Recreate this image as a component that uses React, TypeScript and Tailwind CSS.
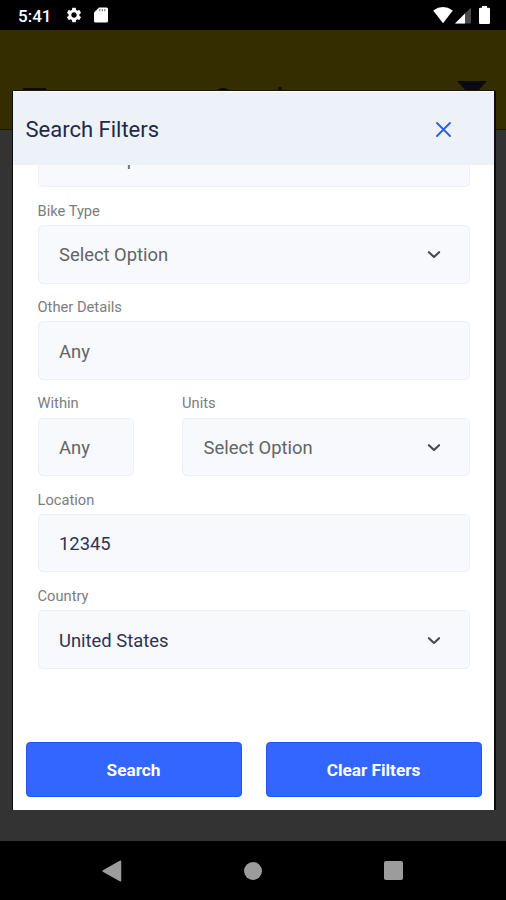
import { useState } from 'react';
import type { ReactNode } from 'react';
import { MdSettings } from 'react-icons/md';

interface FieldProps {
  label: string;
  value: string;
  filled?: boolean;
  dropdown?: boolean;
  className?: string;
}

function ChevronDown() {
  return (
    <svg width="14" height="10" viewBox="0 0 14 10" fill="none" className="shrink-0">
      <path d="M1.9 2.2 7 7 12.1 2.2" stroke="#48494c" strokeWidth="2.1" strokeLinecap="round" strokeLinejoin="round" />
    </svg>
  );
}

function Box({ children }: { children: ReactNode }) {
  return (
    <div className="flex h-[58.6px] items-center justify-between rounded-[5px] border border-[#eceff3] bg-[#f7f9fc] pt-[2.4px] pr-[28px] pl-[20.5px] text-[18.4px] leading-[24px]">
      {children}
    </div>
  );
}

function Field({ label, value, filled, dropdown, className }: FieldProps) {
  return (
    <div className={`pt-[13.6px] ${className ?? ''}`}>
      <div className="mb-[4.1px] text-[14.7px] leading-[20px] text-[#7b7d81]">{label}</div>
      <Box>
        <span className={filled ? 'text-[#2f3350]' : 'text-[#626467]'}>{value}</span>
        {dropdown && <ChevronDown />}
      </Box>
    </div>
  );
}

function StatusBar() {
  return (
    <div className="flex h-[30px] items-center justify-between bg-black pr-[16px] pl-[18px] text-white">
      <div className="flex items-center">
        <span className="w-[47px] pt-[2px] text-[17px] leading-[30px] font-medium">5:41</span>
        <MdSettings size={18} />
        <svg width="14" height="16" viewBox="0 0 14 16" className="ml-[11px]">
          <path d="M5 0.5H12.5Q14 0.5 14 2V14Q14 15.5 12.5 15.5H1.5Q0 15.5 0 14V5.5Z" fill="#fff" />
          <path d="M5.8 2V4.2M8.3 2V4.2M10.8 2V4.2" stroke="#777" strokeWidth="1.1" />
        </svg>
      </div>
      <div className="flex items-center">
        <svg width="20" height="17" viewBox="0 0 20 17">
          <path d="M0.2 3.4Q10-3.2 19.8 3.4L10 16.2Z" fill="#fff" />
        </svg>
        <svg width="17" height="17" viewBox="0 0 17 17" className="ml-[2px]">
          <path d="M16 0.5V16.5H0Z" fill="#4a4a4a" />
          <path d="M10 6.5V16.5H0Z" fill="#fff" />
        </svg>
        <svg width="11" height="18" viewBox="0 0 11 18" className="ml-[7px]">
          <path d="M3 0H8V1.8H9.7Q11 1.8 11 3.1V16.7Q11 18 9.7 18H1.3Q0 18 0 16.7V3.1Q0 1.8 1.3 1.8H3Z" fill="#fff" />
        </svg>
      </div>
    </div>
  );
}

function AppBar() {
  return (
    <div className="flex h-[100px] items-start justify-between border-b border-[#1c1900] bg-[#332d00] px-[19px] pt-[50px] text-[#0a0a10]">
      <svg width="30" height="30" viewBox="0 0 30 30" className="mt-[2px]">
        <path d="M4 7.5H27M4 15H27M4 22.5H27" stroke="currentColor" strokeWidth="3" />
      </svg>
      <span className="pt-[1px] text-[24px] leading-[32px] font-medium">Search</span>
      <svg width="30" height="30" viewBox="0 0 30 30">
        <path d="M0 1H30L18 14V26L12 22V14Z" fill="currentColor" />
      </svg>
    </div>
  );
}

function NavBar() {
  return (
    <div className="flex h-[59px] items-center justify-between bg-black pr-[103px] pl-[102px] text-[#9c9c9c]">
      <svg width="20" height="22" viewBox="0 0 20 22">
        <path d="M18.5 1.2V20.8L1.2 11Z" fill="currentColor" stroke="currentColor" strokeWidth="1.5" strokeLinejoin="round" />
      </svg>
      <div className="size-[18px] rounded-full bg-[#9c9c9c]" />
      <div className="size-[19px] rounded-[2px] bg-[#9c9c9c]" />
    </div>
  );
}

function FiltersModal({ onClose }: { onClose: () => void }) {
  return (
    <div className="absolute top-[91px] left-[13px] flex h-[718.5px] w-[481px] flex-col bg-white shadow-[-1px_0_0_0_#0c0c0c,2px_0_0_0_#0c0c0c,0_-1px_0_0_#1a1700]">
      <div className="flex h-[74px] shrink-0 items-center justify-between border-t border-white bg-[#edf1f8] pr-[43px] pl-[12.5px]">
        <h2 className="pt-[2px] text-[22px] leading-[30px] text-[#222b45]">Search Filters</h2>
        <button onClick={onClose} aria-label="Close" className="pt-[1px]">
          <svg width="15" height="15" viewBox="0 0 15 15">
            <path d="M1 1 14 14M14 1 1 14" stroke="#2a5cf0" strokeWidth="1.8" strokeLinecap="round" />
          </svg>
        </button>
      </div>

      <div className="min-h-0 flex-1 overflow-hidden pr-[24.5px] pl-[24.5px]">
        <div className="-mt-[36.3px]">
          <Box>
            <span className="text-[#626467]">Select Option</span>
            <ChevronDown />
          </Box>
        </div>
        <Field label="Bike Type" value="Select Option" dropdown />
        <Field label="Other Details" value="Any" />
        <div className="flex gap-[48px]">
          <Field label="Within" value="Any" className="w-[96.5px]" />
          <Field label="Units" value="Select Option" dropdown className="flex-1" />
        </div>
        <Field label="Location" value="12345" filled />
        <Field label="Country" value="United States" filled dropdown />
      </div>

      <div className="flex shrink-0 gap-[24px] px-[12.5px] pb-[12.5px]">
        {['Search', 'Clear Filters'].map((text) => (
          <button
            key={text}
            className="h-[55px] flex-1 rounded-[4px] border border-[#1f55f5] bg-[#3366ff] pt-[3px] text-[17.2px] font-bold text-white"
          >
            {text}
          </button>
        ))}
      </div>
    </div>
  );
}

export default function App() {
  const [open, setOpen] = useState(true);

  return (
    <div className="relative flex h-[900px] w-[506px] flex-col overflow-hidden bg-[#333333] font-[Roboto,sans-serif]">
      <StatusBar />
      <AppBar />
      <div className="flex-1" />
      <NavBar />
      {open && <FiltersModal onClose={() => setOpen(false)} />}
    </div>
  );
}
